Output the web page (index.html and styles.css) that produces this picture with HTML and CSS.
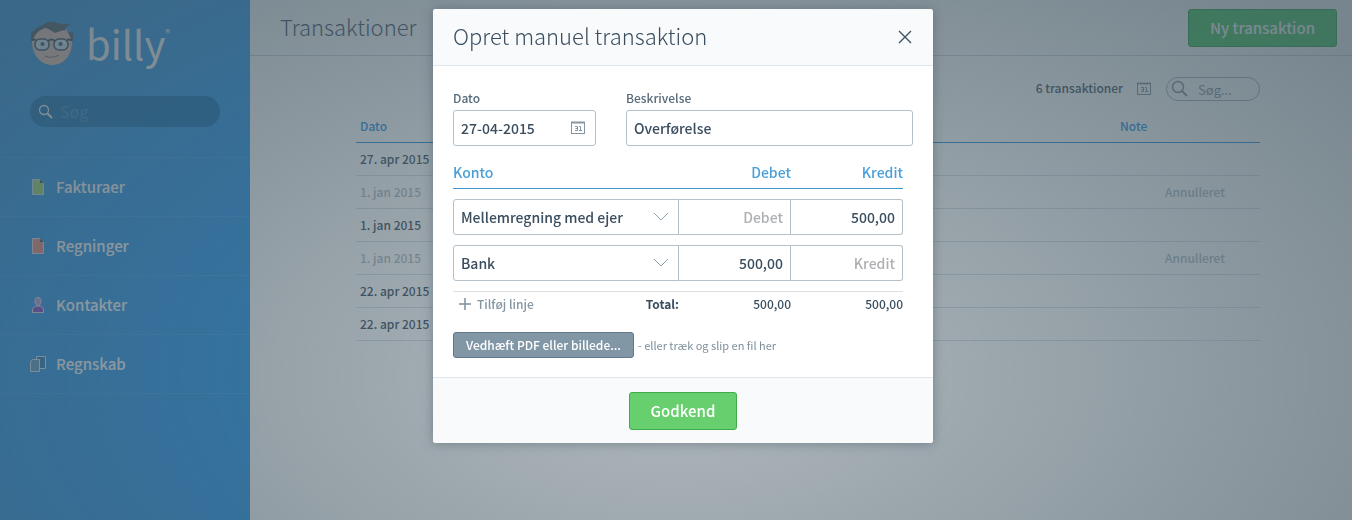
FILE: index.html
```
<!DOCTYPE html>
<html lang="da">
<head>
    <meta charset="UTF-8">
    <meta name="viewport" content="width=device-width, initial-scale=1.0">
    <title>Billy - Opret manuel transaktion</title>
    <link rel="stylesheet" href="styles.css">
</head>
<body>
    <div class="app">
        <aside class="sidebar">
            <a class="logo" href="#">
                <svg class="logo-face" width="44" height="46" viewBox="0 0 44 46">
                    <path d="M2 20 C2 10 10 5 22 5 C34 5 42 11 42 22 C42 36 33 45 22 45 C11 45 2 36 2 20Z" fill="#f5c6b4"/>
                    <path d="M1 21 L1 13 C5 9 8 7 13 5 C17 1 22 1 27 3 C30 4 35 4 40 4 C38 5 36 7 35 9 C36 11 39 12 43 13 L43 21 L41 21 C41 17 39 14 36 10 C32 10 28 12 25 13 C22 11 19 9 16 8 C10 9 4 14 3 21Z" fill="#43525c"/>
                    <rect x="5" y="19" width="14" height="11" rx="5" fill="#d6f0fa" stroke="#2c3f50" stroke-width="1.500"/>
                    <rect x="24" y="19" width="14" height="11" rx="5" fill="#d6f0fa" stroke="#2c3f50" stroke-width="1.500"/>
                    <path d="M1 20 L6 19.500 M37 19.500 L42 20 M18 21 Q21.500 18 25 21" fill="none" stroke="#2c3f50" stroke-width="2"/>
                    <circle cx="12.500" cy="24" r="2" fill="#2c4a5e"/>
                    <circle cx="30.500" cy="24" r="2" fill="#2c4a5e"/>
                    <path d="M15 36 Q22 39 29 35" fill="none" stroke="#8a5a50" stroke-width="1"/>
                </svg>
                <span class="logo-text">billy</span><span class="logo-mark">®</span>
            </a>

            <div class="sidebar-search">
                <svg width="16" height="16" viewBox="0 0 16 16" fill="none" stroke="#fff">
                    <circle cx="6" cy="6" r="4.500" stroke-width="1.300"/>
                    <path d="M9.500 9.500 L14 14" stroke-width="2"/>
                </svg>
                <input type="text" placeholder="Søg" aria-label="Søg">
            </div>

            <nav class="menu">
                <a href="#">
                    <svg width="16" height="18" viewBox="0 0 16 18"><path d="M2.500 1.500 H10.500 L13.500 4.500 V16.500 H2.500Z" fill="#9bdc6a" stroke="#c5e6f5"/><path d="M10 1 V5 H14Z" fill="#27506e"/></svg>
                    Fakturaer
                </a>
                <a href="#">
                    <svg width="16" height="18" viewBox="0 0 16 18"><path d="M2.500 1.500 H10.500 L13.500 4.500 V16.500 H2.500Z" fill="#ef8578" stroke="#e6dce6"/><path d="M10 1 V5 H14Z" fill="#27506e"/></svg>
                    Regninger
                </a>
                <a href="#">
                    <svg width="16" height="18" viewBox="0 0 16 18"><path d="M2.500 16.500 V14 C2.500 11 5 10 8 10 C11 10 13.500 11 13.500 14 V16.500Z" fill="#7a3fc0" stroke="#e6dcf2"/><path d="M5 5 C5 2.500 6 1.500 8 1.500 C10 1.500 11 2.500 11 5 C11 8 10 9.500 8 9.500 C6 9.500 5 8 5 5Z" fill="#b99be0" stroke="#e6dcf2"/></svg>
                    Kontakter
                </a>
                <a href="#">
                    <svg width="16" height="18" viewBox="0 0 16 18" stroke="#dceefa"><path d="M6.500 1.500 H15.500 V13.500 H6.500Z" fill="#2b78b5"/><path d="M2.500 4.500 H9.500 V16.500 H.500 V6.500Z" fill="#5d9cc8"/></svg>
                    Regnskab
                </a>
            </nav>
        </aside>

        <main class="main">
            <header class="topbar">
                <h1>Transaktioner</h1>
                <button class="btn btn-green btn-new" type="button">Ny transaktion</button>
            </header>

            <section class="content">
                <div class="toolbar">
                    <span class="count">6 transaktioner</span>
                    <button class="icon-btn" type="button" aria-label="Vælg periode">
                        <svg width="14" height="14" viewBox="0 0 14 14" fill="none" stroke="#7b909e"><rect x=".500" y="1.500" width="13" height="11"/><path d="M0 1.500 H14" stroke-width="2" stroke-dasharray="2 1"/><path d="M4 5.500 H6.500 V9.500 H4 M4.500 7.500 H6.500 M8 5.500 H9.500 V9.500 M8 9.500 H11"/></svg>
                    </button>
                    <div class="table-search">
                        <svg width="18" height="18" viewBox="0 0 18 18" fill="none" stroke="#7d92a0">
                            <circle cx="7" cy="7" r="5.500" stroke-width="1.500"/>
                            <path d="M11 11 L16 16" stroke-width="2"/>
                        </svg>
                        <input type="text" placeholder="Søg..." aria-label="Søg i transaktioner">
                    </div>
                </div>

                <table class="transactions">
                    <thead>
                        <tr><th>Dato</th><th class="note">Note</th></tr>
                    </thead>
                    <tbody>
                        <tr><td>27. apr 2015</td><td></td></tr>
                        <tr class="voided"><td>1. jan 2015</td><td>Annulleret</td></tr>
                        <tr><td>1. jan 2015</td><td></td></tr>
                        <tr class="voided"><td>1. jan 2015</td><td>Annulleret</td></tr>
                        <tr><td>22. apr 2015</td><td></td></tr>
                        <tr><td>22. apr 2015</td><td></td></tr>
                    </tbody>
                </table>
            </section>
        </main>
    </div>

    <div class="overlay">
        <form class="modal" role="dialog" aria-labelledby="modal-title">
            <div class="modal-header">
                <h2 id="modal-title">Opret manuel transaktion</h2>
                <button class="icon-btn" type="button" aria-label="Luk">
                    <svg width="16" height="16" viewBox="0 0 16 16" fill="none" stroke="#42525f" stroke-width="1.400"><path d="M2 2 L14 14 M14 2 L2 14"/></svg>
                </button>
            </div>

            <div class="modal-body">
                <div class="fields">
                    <div class="field field-date">
                        <label for="date">Dato</label>
                        <div class="input-icon">
                            <input type="text" id="date" value="27-04-2015">
                            <svg width="14" height="14" viewBox="0 0 14 14" fill="none" stroke="#8496a4"><rect x=".500" y="1.500" width="13" height="11"/><path d="M0 1.500 H14" stroke-width="2"/><path d="M4 5.500 H6.500 V9.500 H4 M4.500 7.500 H6.500 M8 5.500 H9.500 V9.500 M8 9.500 H11"/></svg>
                        </div>
                    </div>
                    <div class="field field-text">
                        <label for="description">Beskrivelse</label>
                        <input type="text" id="description" value="Overførelse">
                    </div>
                </div>

                <table class="lines">
                    <thead>
                        <tr><th class="account">Konto</th><th>Debet</th><th>Kredit</th></tr>
                    </thead>
                    <tbody>
                        <tr>
                            <td>
                                <div class="select">
                                    <select aria-label="Konto"><option>Mellemregning med ejer</option></select>
                                    <svg width="16" height="10" viewBox="0 0 16 10" fill="none" stroke="#8fa0ad"><path d="M1 1 L8 8 L15 1"/></svg>
                                </div>
                            </td>
                            <td><input type="text" placeholder="Debet" aria-label="Debet"></td>
                            <td><input class="last" type="text" placeholder="Kredit" aria-label="Kredit" value="500,00"></td>
                        </tr>
                        <tr>
                            <td>
                                <div class="select">
                                    <select aria-label="Konto"><option>Bank</option></select>
                                    <svg width="16" height="10" viewBox="0 0 16 10" fill="none" stroke="#8fa0ad"><path d="M1 1 L8 8 L15 1"/></svg>
                                </div>
                            </td>
                            <td><input type="text" placeholder="Debet" aria-label="Debet" value="500,00"></td>
                            <td><input class="last" type="text" placeholder="Kredit" aria-label="Kredit"></td>
                        </tr>
                    </tbody>
                    <tfoot>
                        <tr>
                            <td>
                                <div class="sum">
                                    <button class="add-line" type="button">
                                        <svg width="14" height="14" viewBox="0 0 14 14" fill="none" stroke="#7d8f9c" stroke-width="1.500"><path d="M7 1 V13 M1 7 H13"/></svg>
                                        Tilføj linje
                                    </button>
                                    <strong>Total:</strong>
                                </div>
                            </td>
                            <td>500,00</td>
                            <td>500,00</td>
                        </tr>
                    </tfoot>
                </table>

                <div class="attach">
                    <button class="btn btn-grey" type="button">Vedhæft PDF eller billede...</button>
                    <span>- eller træk og slip en fil her</span>
                </div>
            </div>

            <div class="modal-footer">
                <button class="btn btn-green" type="button">Godkend</button>
            </div>
        </form>
    </div>
</body>
</html>
```
FILE: styles.css
```
* {
    box-sizing: border-box;
}
body {
    margin: 0;
    font-family: "Noto Sans CJK SC", "Open Sans", sans-serif;
    font-size: 12px;
    line-height: 20px;
    color: #3a4d5e;
    background: #fff;
}
h1, h2 {
    margin: 0;
    padding-bottom: 4px;
    font-size: 22px;
    line-height: 32px;
    font-weight: 300;
}
input, select, button {
    font-family: inherit;
    color: inherit;
    margin: 0;
}
a {
    color: inherit;
    text-decoration: none;
}
svg {
    display: block;
    flex: none;
}
.app {
    display: flex;
    min-height: 100vh;
}

/* Sidebar */
.sidebar {
    width: 250px;
    flex: none;
    background: #2294ea;
    color: #fff;
}
.logo {
    display: flex;
    padding: 20px 30px 0;
    height: 96px;
}
.logo-text {
    margin-left: 12px;
    font-size: 40px;
    line-height: 46px;
    font-weight: 400;
}
.logo-mark {
    font-size: 10px;
    line-height: 26px;
}
.sidebar-search {
    display: flex;
    align-items: center;
    gap: 6px;
    height: 31px;
    margin: 0 30px;
    padding: 0 8px;
    border-radius: 16px;
    background: #0a6fb8;
}
.sidebar-search input {
    width: 100%;
    min-width: 0;
    padding: 0 0 2px;
    border: 0;
    outline: none;
    background: none;
    font-size: 16px;
}
.sidebar-search input::placeholder {
    color: #388cc8;
}
.menu {
    margin-top: 30px;
    border-top: 1px solid #349dec;
}
.menu a {
    display: flex;
    align-items: center;
    gap: 10px;
    height: 59px;
    padding: 0 30px;
    border-bottom: 1px solid #349dec;
    font-size: 15px;
    font-weight: 500;
}

/* Page */
.main {
    flex: 1;
    min-width: 0;
}
.topbar {
    display: flex;
    align-items: center;
    justify-content: space-between;
    height: 56px;
    padding: 0 15px 0 30px;
    border-bottom: 1px solid #ccd6dd;
}
.content {
    padding: 20px 92px 0 106px;
}
.toolbar {
    display: flex;
    align-items: center;
    justify-content: flex-end;
    height: 26px;
    font-weight: 500;
}
.toolbar .count {
    padding-bottom: 2px;
}
.icon-btn {
    padding: 0;
    border: 0;
    background: none;
    cursor: pointer;
}
.toolbar .icon-btn {
    margin: 0 15px 0 14px;
}
.table-search {
    display: flex;
    align-items: center;
    gap: 9px;
    width: 94px;
    height: 24px;
    padding: 0 4px;
    border: 1px solid #9fb0bc;
    border-radius: 12px;
}
.table-search input {
    width: 100%;
    min-width: 0;
    padding: 0;
    border: 0;
    outline: none;
    background: none;
    font-size: 13px;
}
.table-search input::placeholder {
    color: #7d92a0;
}
.transactions {
    width: 100%;
    margin-top: 8px;
    border-collapse: collapse;
}
.transactions th {
    height: 32px;
    padding: 0 4px;
    border-bottom: 1px solid #1f8fe0;
    color: #1f8fe0;
    font-weight: 500;
    text-align: left;
}
.transactions .note {
    width: 144px;
}
.transactions td {
    height: 33px;
    padding: 0 4px;
    border-bottom: 1px solid #d6dfe5;
    font-weight: 500;
}
.transactions td:last-child {
    padding-right: 35px;
    text-align: right;
}
.transactions .voided {
    color: #adb9c2;
}

/* Buttons */
.btn {
    border: 1px solid;
    border-radius: 3px;
    color: #fff;
    font-weight: 500;
    cursor: pointer;
}
.btn-green {
    height: 38px;
    padding: 0 21px;
    border-color: #41ab4c;
    background: #67cf6e;
    font-size: 15px;
}
.btn-new {
    border-color: #1f9a38;
    background: #36c453;
}
.btn-grey {
    height: 26px;
    padding: 0 12px;
    border-color: #60788a;
    background: #8297a6;
    font-size: 12px;
    line-height: 20px;
}

/* Modal */
.overlay {
    position: fixed;
    inset: 0;
    display: flex;
    align-items: flex-start;
    justify-content: center;
    padding-left: 14px;
    padding-top: 9px;
    background: radial-gradient(900px 500px at 50% 72%, rgba(68, 88, 100, .42), rgba(68, 88, 100, .73));
}
.modal {
    width: 500px;
    border-radius: 3px;
    background: #fff;
    box-shadow: 0 1px 12px rgba(40, 55, 70, .35);
}
.modal-header {
    display: flex;
    align-items: center;
    justify-content: space-between;
    height: 57px;
    padding: 0 20px;
    border-bottom: 1px solid #dfe6ec;
    border-radius: 3px 3px 0 0;
    background: #f8fafc;
}
.modal-body {
    padding: 22px 20px 19px;
}
.fields {
    display: flex;
    gap: 30px;
}
.field-date {
    width: 143px;
}
.field-text {
    flex: 1;
}
.field label {
    display: block;
    height: 22px;
    color: #566a7a;
    font-weight: 500;
}
.modal input, .modal select {
    display: block;
    width: 100%;
    height: 36px;
    padding: 0 7px;
    border: 1px solid #b3c0ca;
    border-radius: 3px;
    outline: none;
    background: #fff;
    font-size: 14px;
    font-weight: 500;
}
.modal input::placeholder {
    color: #adb0b3;
}
.input-icon, .select {
    position: relative;
}
.input-icon svg {
    position: absolute;
    top: 11px;
    right: 11px;
}
.select svg {
    position: absolute;
    top: 13px;
    right: 10px;
    pointer-events: none;
}
.lines {
    width: calc(100% - 10px);
    margin-top: 11px;
    border-spacing: 0;
    table-layout: fixed;
}
.lines th {
    height: 32px;
    padding: 0 0 2px;
    border-bottom: 1px solid #3e97d3;
    color: #4a9fd9;
    font-size: 14px;
    font-weight: 500;
    text-align: right;
}
.lines .account {
    width: 226px;
    text-align: left;
}
.lines td {
    padding: 10px 0 0;
}
.lines tbody tr:last-child td {
    padding-bottom: 10px;
}
.lines select {
    appearance: none;
    border-radius: 3px 0 0 3px;
}
.lines input {
    border-left: 0;
    border-radius: 0;
    text-align: right;
}
.lines input.last {
    border-radius: 0 3px 3px 0;
}
.lines tfoot td {
    height: 26px;
    padding: 0 0 2px;
    border-top: 1px solid #d9e0e6;
    font-weight: 500;
    text-align: right;
}
.sum {
    display: flex;
    justify-content: space-between;
}
.add-line {
    display: flex;
    align-items: center;
    gap: 5px;
    padding: 0 0 0 5px;
    border: 0;
    background: none;
    color: #8495a2;
    font-size: 12px;
    font-weight: 500;
    line-height: 20px;
    cursor: pointer;
}
.attach {
    display: flex;
    align-items: center;
    gap: 4px;
    margin-top: 15px;
    color: #7d8f9c;
    font-size: 11px;
}
.modal-footer {
    display: flex;
    align-items: center;
    justify-content: center;
    height: 66px;
    border-top: 1px solid #dfe6ec;
    border-radius: 0 0 3px 3px;
    background: #f8fafc;
}
```
